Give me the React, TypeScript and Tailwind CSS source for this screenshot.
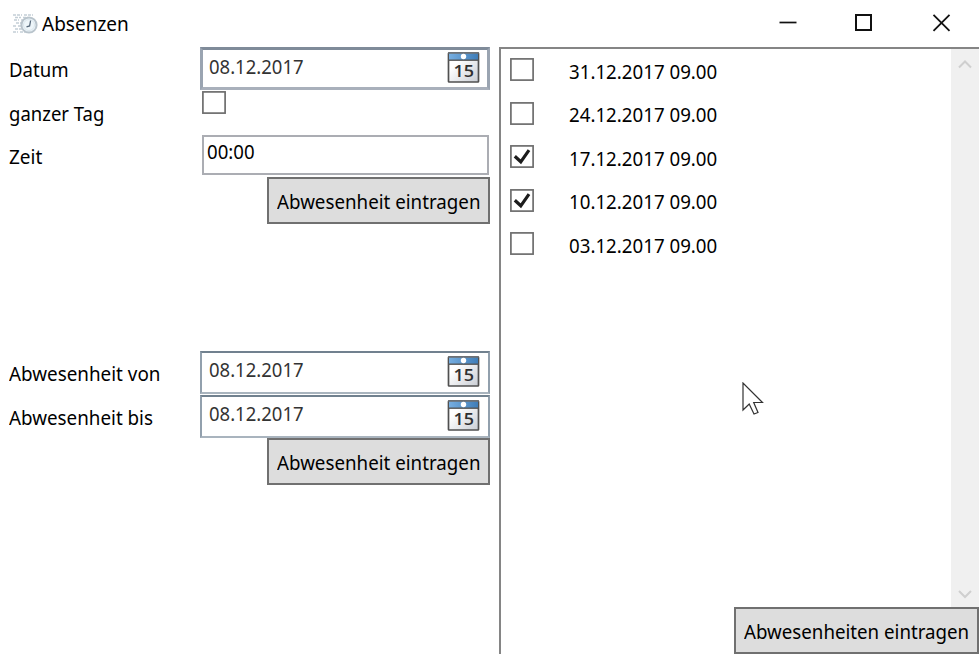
import type { ReactNode } from 'react';

function Txt({ children, className = '' }: { children: ReactNode; className?: string }) {
  return (
    <span className={`block w-max origin-left whitespace-nowrap text-[20px] leading-[28px] ${className}`}>
      {children}
    </span>
  );
}

function CalendarIcon() {
  return (
    <svg width="33" height="31" viewBox="0 0 33 31" className="shrink-0">
      <defs>
        <linearGradient id="page" x1="0" y1="0" x2="1" y2="1">
          <stop offset="0.3" stopColor="#fff" />
          <stop offset="1" stopColor="#c9cdd4" />
        </linearGradient>
        <linearGradient id="head" x1="0" y1="0" x2="1" y2="0">
          <stop offset="0" stopColor="#77aee0" />
          <stop offset="1" stopColor="#3f7db8" />
        </linearGradient>
      </defs>
      <rect x="1.5" y="1" width="30" height="29" rx="0.6" fill="url(#page)" stroke="#505050" strokeWidth="1.7" />
      <rect x="2" y="1.5" width="29" height="6.500" fill="url(#head)" />
      <path d="M1 8.200h31" stroke="#555" strokeWidth="1.400" />
      <path d="M1 0.900h31" stroke="#6a6f75" strokeWidth="1.400" />
      <circle cx="16.500" cy="4.500" r="2.700" fill="#fff" />
      <text x="6.500" y="25.300" textLength="20.500" lengthAdjust="spacingAndGlyphs" fontFamily="'Open Sans', sans-serif" fontWeight="600" fontSize="16" fill="#303030">15</text>
    </svg>
  );
}

function DateField({ focused = false }: { focused?: boolean }) {
  const frame = focused
    ? 'h-[43px] border-[3px] border-t-[#7f8b99] border-x-[#9aa4b1] border-b-[#a9b0bb] pl-[6px] pr-[7px]'
    : 'h-[43px] border-2 border-t-[#71818f] border-x-[#92a0ad] border-b-[#a9b4be] pl-[7px] pr-[8px]';
  return (
    <div className={`flex w-[290px] items-start justify-between bg-white ${frame}`}>
      <Txt className={`scale-x-[0.925] text-[#333] ${focused ? 'mt-[2.5px]' : 'mt-[3px]'}`}>08.12.2017</Txt>
      <div className={focused ? 'mt-[2px]' : 'mt-[3px]'}>
        <CalendarIcon />
      </div>
    </div>
  );
}

function Box({ checked = false }: { checked?: boolean }) {
  return (
    <svg width="24" height="23" viewBox="0 0 24 23" className="block shrink-0">
      <rect x="0.9" y="0.9" width="22.2" height="21.2" fill="#fff" stroke="#6e6e6e" strokeWidth="1.7" />
      {checked && <path d="M4.8 11.3 10.8 16.8 19 5.2" fill="none" stroke="#1c1c1c" strokeWidth="3.2" />}
    </svg>
  );
}

function Button({ children, className }: { children: ReactNode; className: string }) {
  return (
    <button className={`flex h-[47px] justify-start border-2 border-[#707070] bg-[#ddd] pl-[8px] pt-[9px] ${className}`}>
      {children}
    </button>
  );
}

function AppIcon() {
  return (
    <svg width="26" height="22" viewBox="0 0 26 22">
      <path d="M1 2h9M12 2h9M3 4.500h6M11 4.500h5M2 7h5M9 7h5M4 10h8M1 13h4M6 13h5M3 16h8M1 19h5M8 19h5" stroke="#c3ced6" strokeWidth="1.500" strokeDasharray="3 1" />
      <circle cx="17" cy="12" r="7.600" fill="#edf5fa" stroke="#b9c4cc" strokeWidth="2" />
      <circle cx="17" cy="12" r="5.500" fill="#eef6fa" stroke="#dbe6ec" />
      <path d="M18.600 7.500 17.600 13 14.500 13.800" fill="none" stroke="#56687a" strokeWidth="1.300" />
    </svg>
  );
}

const entries = [
  { date: '31.12.2017 09.00', on: false },
  { date: '24.12.2017 09.00', on: false },
  { date: '17.12.2017 09.00', on: true },
  { date: '10.12.2017 09.00', on: true },
  { date: '03.12.2017 09.00', on: false },
];

export default function App() {
  return (
    <div className="relative flex h-[654px] w-[979px] flex-col overflow-hidden bg-white font-['Noto_Sans','Open_Sans',sans-serif] text-black">
      <header className="flex h-[47px] shrink-0 justify-between">
        <div className="flex pl-[12px] pt-[10px]">
          <div className="mt-[3px]"><AppIcon /></div>
          <Txt className="ml-[4px] scale-x-[0.95]">Absenzen</Txt>
        </div>
        <svg width="200" height="46" viewBox="0 0 200 46" fill="none" stroke="#111">
          <path d="M0.500 22.500h17" strokeWidth="1.700" />
          <rect x="77" y="15" width="15" height="15" strokeWidth="2" />
          <path d="M154.500 14.800l16 16M170.500 14.800l-16 16" strokeWidth="1.800" />
        </svg>
      </header>
      <main className="flex min-h-0 flex-1">
        <section className="w-[499px] shrink-0 pl-[8px]">
          <div className="flex h-[44px]">
            <Txt className="ml-[0.5px] mt-[9px] scale-x-[0.93]">Datum</Txt>
            <div className="ml-auto mr-[9px]"><DateField focused /></div>
          </div>
          <div className="grid h-[44px] grid-cols-[194px_auto]">
            <Txt className="ml-[0.5px] mt-[9px] scale-x-[0.925]">ganzer Tag</Txt>
            <div><Box /></div>
          </div>
          <div className="grid h-[42px] grid-cols-[194px_287px]">
            <Txt className="ml-[0.5px] mt-[8px] scale-x-[0.95]">Zeit</Txt>
            <div className="h-[40px] border-2 border-[#abadb3] pl-[3px]">
              <Txt className="mt-px scale-x-[0.93]">00:00</Txt>
            </div>
          </div>
          <div className="flex h-[174px] justify-end pr-[9px]">
            <Button className="w-[223px]"><Txt className="scale-x-[0.937]">Abwesenheit eintragen</Txt></Button>
          </div>
          <div className="flex h-[44px] justify-between pr-[9px]">
            <Txt className="ml-[0.5px] mt-[9px] scale-x-[0.942]">Abwesenheit von</Txt>
            <DateField />
          </div>
          <div className="flex h-[43px] justify-between pr-[9px]">
            <Txt className="ml-[0.5px] mt-[8.5px] scale-x-[0.94]">Abwesenheit bis</Txt>
            <DateField />
          </div>
          <div className="flex justify-end pr-[9px]">
            <Button className="w-[223px]"><Txt className="scale-x-[0.937]">Abwesenheit eintragen</Txt></Button>
          </div>
        </section>
        <section className="flex min-w-0 flex-1 flex-col border-l-2 border-t-2 border-[#858585]">
          <div className="flex h-[558px] shrink-0 justify-between">
            <ul className="pl-[9px] pt-[9px]">
              {entries.map((e) => (
                <li key={e.date} className="flex h-[43.5px]">
                  <Box checked={e.on} />
                  <Txt className="-mt-[0.5px] ml-[35px] scale-x-[0.935]">{e.date}</Txt>
                </li>
              ))}
            </ul>
            <div className="flex w-[28px] flex-col items-center justify-between bg-[#f0f0f0] pb-[8px] pt-[10px]">
              <svg width="14" height="10" viewBox="0 0 14 10" fill="none" stroke="#cfcfcf" strokeWidth="2"><path d="M1 8.500 7 2.500 13 8.500" /></svg>
              <svg width="14" height="10" viewBox="0 0 14 10" fill="none" stroke="#cfcfcf" strokeWidth="2"><path d="M1 2 7 8 13 2" /></svg>
            </div>
          </div>
          <div className="flex justify-end">
            <Button className="w-[245px]"><Txt className="scale-x-[0.935]">Abwesenheiten eintragen</Txt></Button>
          </div>
        </section>
      </main>
      <svg className="absolute left-[742px] top-[382px]" width="23" height="34" viewBox="0 0 23 34">
        <path d="M1 1V28L7.200 22 12 32 16 30.500 11.700 20.500H20.500Z" fill="#fff" stroke="#333" strokeWidth="1.200" />
      </svg>
    </div>
  );
}
